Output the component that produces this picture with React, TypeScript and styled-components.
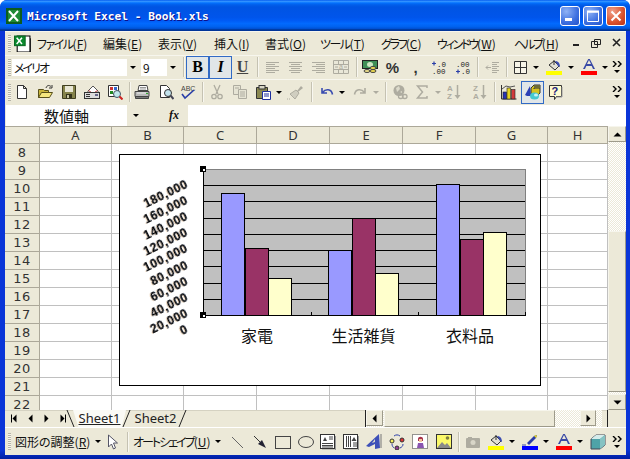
import React from "react";
import styled, { createGlobalStyle } from "styled-components";

const GlobalStyle = createGlobalStyle`
    html, body { margin: 0; padding: 0; background: #fff; }
    #root { width: 630px; height: 459px; overflow: hidden; }
`;

const UI_FONT = `"Noto Sans CJK JP", "Noto Sans", sans-serif`;

const off = "#aeaca0";

const icons: Record<string, React.ReactNode> = {
    excelMenu: (
        <>
            <path d="M3 1h12v15H3z" fill="#fff" stroke="#000" />
            <path d="M16 3v14H5" fill="none" stroke="#000" strokeWidth="1.4" />
            <rect x="0.5" y="1" width="10" height="9" fill="#0b8a2e" stroke="#0a6a22" />
            <path d="M2.5 2.5l5 6M7.5 2.5l-5 6" stroke="#fff" strokeWidth="1.4" />
        </>
    ),
    new: <path d="M3.5 1.5h6l3 3v10h-9zM9.5 1.5v3h3" fill="#fff" stroke="#333" />,
    open: (
        <>
            <path d="M1.5 5.5h5l1 1h4v7h-10z" fill="#c9b53a" stroke="#57501a" />
            <path d="M1.5 13.5l3-5h11l-3 5z" fill="#f5e77e" stroke="#57501a" />
            <path d="M9 4c1-3 3-3 5-1.500M15 1v3h-3" fill="none" stroke="#333" />
        </>
    ),
    save: (
        <>
            <path d="M1.500 1.500h13v13h-13z" fill="#85834a" stroke="#3f3e20" />
            <rect x="4" y="2" width="8" height="6" fill="#e8e7d5" />
            <rect x="5" y="10" width="6" height="4" fill="#33331a" />
            <rect x="6" y="11" width="2" height="3" fill="#c9c8a5" />
        </>
    ),
    mail: (
        <>
            <path d="M4 7l5-5 5 5v2H4z" fill="#fff" stroke="#555" />
            <path d="M4.500 6.500l4.500 3 4.500-3" fill="none" stroke="#b33" />
            <rect x="0.500" y="8.500" width="15" height="6" fill="#dcdcdc" stroke="#333" />
            <path d="M2 10.500h4M2 12.500h4" stroke="#333" />
            <rect x="11" y="10" width="3" height="2" fill="#668" />
        </>
    ),
    perm: (
        <>
            <path d="M1.500 1.500h10v11h-10z" fill="#fff" stroke="#333" />
            <rect x="3" y="3" width="3" height="3" fill="#c33" />
            <rect x="7" y="3" width="3" height="3" fill="#36c" />
            <rect x="3" y="7" width="3" height="3" fill="#282" />
            <circle cx="10" cy="10" r="3.500" fill="#bfe7ea" stroke="#456" />
            <path d="M12.500 12.500l3 3" stroke="#c22" strokeWidth="2" />
        </>
    ),
    print: (
        <>
            <path d="M5 1.500h8l1 5H4z" fill="#fff" stroke="#444" />
            <path d="M6 3.500h6M6 5h6" stroke="#999" />
            <path d="M1 7.500h14v5H1z" fill="#b9b9b9" stroke="#444" />
            <path d="M1.500 12.500h13v2h-13z" fill="#777" stroke="#444" />
            <path d="M3 9h9" stroke="#eee" />
            <rect x="12" y="9" width="2" height="1" fill="#3a3" />
        </>
    ),
    preview: (
        <>
            <path d="M2.500 1.500h6l3 3v9h-9z" fill="#fff" stroke="#333" />
            <circle cx="10" cy="9" r="3.500" fill="#c4e4ee" stroke="#333" />
            <path d="M12.500 11.500l3 3.500" stroke="#445" strokeWidth="2" />
        </>
    ),
    spell: (
        <>
            <text x="1" y="7" fontSize="7" fontFamily="Liberation Sans" fill="#444">ABC</text>
            <path d="M2 10l3 4 9-8" fill="none" stroke="#2b3fa8" strokeWidth="1.600" />
        </>
    ),
    cut: (
        <g fill="none" stroke={off} strokeWidth="1.300">
            <path d="M5 1l4 9M11 1l-4 9" />
            <circle cx="5" cy="12.500" r="2.200" />
            <circle cx="11" cy="12.500" r="2.200" />
        </g>
    ),
    copy: (
        <g fill="#e6e4d4" stroke={off}>
            <path d="M1.500 1.500h7v9h-7z" />
            <path d="M6.500 5.500h8v9h-8z" />
            <path d="M3 4h4M8 8h5M8 10h5M8 12h5" />
        </g>
    ),
    paste: (
        <>
            <path d="M1.500 3.500h11v11h-11z" fill="#8a8850" stroke="#333" />
            <rect x="4" y="1.500" width="6" height="3.500" fill="#d8d6c4" stroke="#333" />
            <path d="M7.500 7.500h8v8h-8z" fill="#fff" stroke="#1d2f9e" />
            <path d="M9 10h5M9 12h5" stroke="#1d2f9e" />
        </>
    ),
    painter: (
        <>
            <path d="M10 7l4-5 2 2-5 4z" fill={off} />
            <path d="M3 10l6-4 3 3-4 6z" fill="#d0cec0" stroke={off} />
            <path d="M0 15h3" stroke={off} strokeDasharray="1 1" />
        </>
    ),
    undo: <path d="M3 4v5h5M3.500 8.500c3-4 9-4 10 2" fill="none" stroke="#3a4cb0" strokeWidth="1.600" />,
    redo: <path d="M13 4v5H8M12.500 8.500c-3-4-9-4-10 2" fill="none" stroke={off} strokeWidth="1.600" />,
    link: (
        <>
            <circle cx="7" cy="6.500" r="5.500" fill={off} />
            <path d="M4 4l3-2 1 3-3 3zM8 8l2-1v2z" fill="#dcdacb" />
            <rect x="6.500" y="10.500" width="4.500" height="4" rx="2" fill="none" stroke={off} strokeWidth="1.300" />
            <rect x="10.500" y="10.500" width="4.500" height="4" rx="2" fill="none" stroke={off} strokeWidth="1.300" />
        </>
    ),
    sigma: <path d="M13 4V2H3.500l5 6-5 6H13v-2" fill="none" stroke={off} strokeWidth="1.500" />,
    az: (
        <>
            <text x="0" y="7" fontSize="8" fontWeight="700" fontFamily="Liberation Sans" fill={off}>A</text>
            <text x="0" y="15" fontSize="8" fontWeight="700" fontFamily="Liberation Sans" fill={off}>Z</text>
            <path d="M10.500 1v11" stroke={off} strokeWidth="1.500" />
            <path d="M7.500 11h6l-3 4z" fill={off} />
        </>
    ),
    za: (
        <>
            <text x="0" y="7" fontSize="8" fontWeight="700" fontFamily="Liberation Sans" fill={off}>Z</text>
            <text x="0" y="15" fontSize="8" fontWeight="700" fontFamily="Liberation Sans" fill={off}>A</text>
            <path d="M10.500 1v11" stroke={off} strokeWidth="1.500" />
            <path d="M7.500 11h6l-3 4z" fill={off} />
        </>
    ),
    chart: (
        <>
            <path d="M0.500 1v14h15" fill="none" stroke="#333" />
            <path d="M1 5l4-3 4 1 5-1" fill="none" stroke="#555" />
            <rect x="2" y="8" width="3.500" height="7" fill="#2733b5" stroke="#222" strokeWidth="0.600" />
            <rect x="6" y="4" width="3.500" height="11" fill="#e6d31f" stroke="#222" strokeWidth="0.600" />
            <rect x="10.500" y="5.500" width="3.500" height="9.500" fill="#d23a3a" stroke="#222" strokeWidth="0.600" />
        </>
    ),
    drawing: (
        <>
            <path d="M6 4l3-3h6v8l-3 3H6z" fill="#d6c21d" stroke="#333" />
            <path d="M9 4h6M9 4v1" stroke="#333" />
            <rect x="9" y="1" width="6" height="3" fill="#6d6a38" />
            <path d="M5 2L0 11l2 1h4z" fill="#2b3fb5" />
            <ellipse cx="9.500" cy="12" rx="4.500" ry="3.500" fill="#46c8d0" />
            <ellipse cx="11" cy="11" rx="2" ry="1.500" fill="#c6f1f3" />
        </>
    ),
    help: (
        <>
            <path d="M1.500 1.500h12v11h-5l-2 3v-3h-5z" fill="#fffbd0" stroke="#333" />
            <path d="M14 3v10H9" fill="none" stroke="#999" />
            <text x="3.600" y="11" fontSize="11" fontWeight="700" fontFamily="Liberation Sans" fill="#20207a">?</text>
        </>
    ),
    alignL: <path d="M2 3.500h13M2 5.500h9M2 7.500h13M2 9.500h9M2 11.500h13M2 13.500h9" stroke={off} />,
    alignC: <path d="M2 3.500h13M4 5.500h9M2 7.500h13M4 9.500h9M2 11.500h13M4 13.500h9" stroke={off} />,
    alignR: <path d="M2 3.500h13M6 5.500h9M2 7.500h13M6 9.500h9M2 11.500h13M6 13.500h9" stroke={off} />,
    merge: (
        <>
            <path d="M0.500 1.500h15v13h-15zM0.500 5.500h15M0.500 10.500h15M5.500 1.500v4M10.500 1.500v4M5.500 10.500v4M10.500 10.500v4" fill="#e9e7d8" stroke={off} />
            <path d="M2 8h3M14 8h-3" stroke={off} />
            <text x="6" y="10" fontSize="7" fontFamily="Liberation Sans" fill={off}>a</text>
        </>
    ),
    currency: (
        <>
            <rect x="0.500" y="1.500" width="15" height="8" fill="#3f8f57" stroke="#222" />
            <ellipse cx="8" cy="5.500" rx="3" ry="2.500" fill="#cfe8c4" />
            <ellipse cx="5" cy="12" rx="3" ry="1.500" fill="#eee08a" stroke="#444" />
            <ellipse cx="11" cy="9" rx="3" ry="1.500" fill="#f0dc50" stroke="#444" />
            <ellipse cx="11" cy="12" rx="3" ry="1.500" fill="#f0dc50" stroke="#444" />
        </>
    ),
    incDec: (
        <>
            <path d="M1 4.500h4M3 2.500v4" stroke="#2b3fa8" strokeWidth="1.200" />
            <text x="6" y="8" fontSize="7.500" fontFamily="Liberation Mono" fill="#222">.0</text>
            <text x="1" y="15" fontSize="7.500" fontFamily="Liberation Mono" fill="#222">.00</text>
        </>
    ),
    decDec: (
        <>
            <text x="1" y="8" fontSize="7.500" fontFamily="Liberation Mono" fill="#222">.00</text>
            <path d="M1 12.500h4M3 10.500v4" stroke="#2b3fa8" strokeWidth="1.200" />
            <text x="6" y="15" fontSize="7.500" fontFamily="Liberation Mono" fill="#222">.0</text>
        </>
    ),
    indent: (
        <>
            <path d="M8 3.500h7M8 5.500h5M8 7.500h7M8 9.500h5M8 11.500h7M8 13.500h5" stroke={off} />
            <path d="M7 8.500H2M4 6.500l-2 2 2 2" fill="none" stroke={off} />
        </>
    ),
    borders: <path d="M2.500 2.500h12v12h-12zM8.500 2.500v12M2.500 8.500h12" fill="#f6f4e8" stroke="#333" />,
    fill: (
        <>
            <path d="M3 6l5-4 5 5-4 4z" fill="#e2e0d4" stroke="#333" />
            <path d="M8 1v5" stroke="#333" />
            <path d="M9 2c3 0 5 2 5 6l-2-1z" fill="#3a4cb0" />
            <rect x="0" y="12" width="16" height="4" fill="#ffff00" />
        </>
    ),
    fontColor: (
        <>
            <path d="M2 10h2l1.300-3h5.400l1.300 3h2L8.800 0H7.200zM6 5l2-4 2 4z" fill="#3a4aa6" fillRule="evenodd" />
            <rect x="0" y="12" width="16" height="4" fill="#ff0000" />
        </>
    ),
    penColor: (
        <>
            <path d="M5 9l7-7 3-1-1 3-7 7z" fill="#2a3ca8" />
            <path d="M12 2l2-1 1 1-1 2z" fill="#e6d31f" />
            <path d="M0 11h4" stroke="#3a4aa6" />
            <rect x="0" y="12" width="16" height="4" fill="#0000ff" />
        </>
    ),
    cursor: <path d="M3.500 1v12l3-3 2 5 2-1-2-5h4z" fill="#fff" stroke="#556" />,
    line: <path d="M3 3l11 11" stroke="#666" />,
    arrow: (
        <>
            <path d="M2 2l7 7" stroke="#333" />
            <path d="M14 14L6 10l4-4z" fill="#223" />
        </>
    ),
    rect: <rect x="0.500" y="2.500" width="15" height="12" fill="none" stroke="#444" />,
    oval: <ellipse cx="8" cy="8" rx="7.500" ry="5.500" fill="none" stroke="#444" />,
    textbox: (
        <>
            <rect x="0.500" y="0.500" width="14" height="14" fill="#fff" stroke="#333" />
            <path d="M15.500 2v14H2" fill="none" stroke="#999" />
            <path d="M2 9.500h11M2 11.500h11M2 13h11M9 3h4M9 5h4" stroke="#444" />
            <path d="M3 7l2-4 2 4z" fill="#444" />
        </>
    ),
    vtext: (
        <>
            <rect x="0.500" y="0.500" width="14" height="14" fill="#fff" stroke="#333" />
            <path d="M15.500 2v14H2" fill="none" stroke="#999" />
            <path d="M3.500 2v11M5.500 2v11M7.500 2v11M11 8v5M13 8v5" stroke="#444" />
            <path d="M8.500 7l2.500-4 2.500 4z" fill="#444" />
        </>
    ),
    wordart: (
        <>
            <path d="M13 0L0 12l3 1 6-3v5l5-1z" fill="#3d50b8" />
            <path d="M9 5v3l-3 1z" fill="#dcdacb" />
            <path d="M15 0v14" stroke="#777" />
        </>
    ),
    diagram: (
        <>
            <circle cx="3" cy="7" r="2" fill="#f5ef5c" stroke="#333" />
            <circle cx="13" cy="6" r="2" fill="#d33" stroke="#333" />
            <circle cx="8" cy="14" r="2" fill="#943b94" stroke="#333" />
            <path d="M5 2c2-1.500 4-1.500 6 0M14 10c0 2-1 3-3 4M5 14c-1-1-2-2-2-4" fill="none" stroke="#2b3fa8" />
        </>
    ),
    clipart: (
        <>
            <rect x="0.500" y="0.500" width="15" height="14" fill="#fff" stroke="#333" strokeDasharray="1 1" />
            <path d="M6 5c0-3 5-3 5 0v2H6z" fill="#a8344a" />
            <rect x="7" y="5" width="3" height="3" fill="#f3c7a0" />
            <path d="M5 14l1-5h5l1 5z" fill="#8a55b0" />
        </>
    ),
    picture: (
        <>
            <rect x="0.500" y="0.500" width="15" height="14" fill="#fbf96a" stroke="#333" />
            <circle cx="11.500" cy="4" r="1.800" fill="#7f7f3f" />
            <path d="M1 14l5-6 3 3 2-2 4 5z" fill="#8a8a8a" />
        </>
    ),
    camera: (
        <>
            <rect x="1" y="4" width="14" height="10" rx="1" fill={off} />
            <rect x="3" y="3" width="4" height="2" fill={off} />
            <circle cx="8" cy="8.500" r="2.500" fill="#d8d6c8" />
        </>
    ),
    cube: (
        <>
            <path d="M1 5l5-4h9v10l-5 4H1z" fill="#4fa3a8" stroke="#445" />
            <path d="M1 5l5-4h9l-5 4z" fill="#d5eceb" />
            <path d="M10 5v10l5-4V1z" fill="#86c3c3" />
        </>
    ),
};

const Window = styled.div`
    width: 630px;
    height: 459px;
    box-sizing: border-box;
    display: flex;
    flex-direction: column;
    border-radius: 7px 7px 0 0;
    background: linear-gradient(180deg, #0a35d8 0, #0a35d8 98%, #001ea0 100%);
    overflow: hidden;
`;

const TitleBar = styled.div`
    flex: 0 0 30px;
    display: flex;
    align-items: center;
    padding: 1px 4px 0 6px;
    background: linear-gradient(180deg, #0058ee 0, #3593ff 4%, #288eff 6%, #127dff 8%, #036ffc 10%, #0262ee 14%, #0057e5 20%, #0054e3 24%, #0055eb 56%, #005bf5 66%, #026afe 76%, #0062ef 86%, #0052d6 92%, #0040ab 94%, #003092 100%);
`;

const TitleText = styled.span`
    margin-left: 5px;
    font: 700 11.2px "DejaVu Sans Mono", monospace;
    color: #fff;
    text-shadow: 1px 1px #0f1089;
    flex: 1;
`;

const CaptionButton = styled.div<{ $close?: boolean }>`
    width: 20px;
    height: 20px;
    margin-left: 3px;
    box-sizing: border-box;
    border: 1px solid #fff;
    border-radius: 3px;
    display: flex;
    align-items: center;
    justify-content: center;
    background: ${p =>
        p.$close
            ? "radial-gradient(circle at 30% 25%, #f0a08a, #d9512c 60%, #b8321a)"
            : "radial-gradient(circle at 30% 25%, #8fb2f5, #3c6fe0 60%, #2453c8)"};
`;

const Client = styled.div`
    flex: 1;
    margin: 0 4px 4px 5px;
    display: flex;
    flex-direction: column;
    background: #ece9d8;
    min-height: 0;
`;

const Bar = styled.div<{ $h: number }>`
    flex: 0 0 ${p => p.$h}px;
    min-height: 0;
    display: flex;
    align-items: center;
    box-shadow: inset 0 1px 0 #f7f6ee;
    font: 12px ${UI_FONT};
    color: #111;
`;

const Gripper = styled.div`
    width: 3px;
    height: 17px;
    margin-left: 3px;
    background: repeating-linear-gradient(180deg, #b5b3a6 0 1px, #f6f5ec 1px 2px);
    flex: none;
`;

const MenuItem = styled.div<{ $w: number }>`
    width: ${p => p.$w}px;
    flex: none;
    font-feature-settings: "palt";
    white-space: nowrap;
    u { text-underline-offset: 1px; }
`;

const Tracked = styled.span<{ $track: number }>`
    letter-spacing: ${p => p.$track}px;
`;

const MenuIcon = styled.div`
    width: 22px;
    flex: none;
    margin-right: 4px;
    display: flex;
    justify-content: center;
`;

const MdiGroup = styled.div`
    margin-left: auto;
    display: flex;
`;

const MdiBtn = styled.div`
    width: 20px;
    display: flex;
    justify-content: center;
`;

const Combo = styled.div<{ $w: number }>`
    width: ${p => p.$w}px;
    height: 17px;
    margin-left: ${p => (p.$w > 100 ? 1 : 2)}px;
    flex: none;
    display: flex;
    background: #fff;
    font: 12px ${UI_FONT};
    line-height: 17px;
    padding-left: 2px;
    box-sizing: border-box;
`;

const ComboText = styled.span`
    flex: 1;
    font-feature-settings: "palt";
`;

const ComboArrow = styled.div`
    width: 12px;
    flex: none;
    background: #ece9d8;
    display: flex;
    align-items: center;
    justify-content: center;
`;

const Slot = styled.div<{ $w: number; $active?: boolean }>`
    width: ${p => p.$w}px;
    height: 23px;
    flex: none;
    box-sizing: border-box;
    display: flex;
    align-items: center;
    justify-content: center;
    border: 1px solid ${p => (p.$active ? "#316ac5" : "transparent")};
    background: ${p => (p.$active ? "#e1e6e8" : "transparent")};
`;

const Separator = styled.div<{ $w: number }>`
    width: ${p => p.$w}px;
    height: 20px;
    flex: none;
    position: relative;
    &::after {
        content: "";
        position: absolute;
        left: 50%;
        top: 0;
        bottom: 0;
        width: 1px;
        background: #c5c2b2;
        box-shadow: 1px 0 0 #f8f7f0;
    }
`;

const Letter = styled.span<{ $italic?: boolean; $under?: boolean }>`
    font: ${p => (p.$italic ? "italic 700 16px" : "700 16px")} "Liberation Serif", serif;
    text-decoration: ${p => (p.$under ? "underline" : "none")};
    color: ${p => (p.$under ? "#444" : "#000")};
`;

const NumberMark = styled.span`
    font: 700 15px/15px "Liberation Sans", sans-serif;
    color: #333;
`;

const Triangle = styled.div<{ $off?: boolean }>`
    width: 0;
    height: 0;
    border-left: 3px solid transparent;
    border-right: 3px solid transparent;
    border-top: 3px solid ${p => (p.$off ? off : "#000")};
`;

const Chevron = styled.div`
    margin-left: auto;
    margin-right: 2px;
    width: 14px;
    display: flex;
    flex-direction: column;
    align-items: center;
    gap: 3px;
    flex: none;
`;

const FormulaBar = styled.div`
    flex: 0 0 21px;
    min-height: 0;
    display: flex;
    align-items: stretch;
`;

const NameBox = styled.div`
    width: 121px;
    margin-left: 1px;
    background: #fff;
    font: 15px/21px ${UI_FONT};
    text-align: center;
    color: #111;
`;

const NameArrow = styled.div`
    width: 18px;
    display: flex;
    align-items: center;
    justify-content: center;
`;

const FxLabel = styled.div`
    width: 43px;
    padding-right: 9px;
    box-sizing: border-box;
    text-align: right;
    font: italic 700 12px/21px "Liberation Serif", serif;
    color: #111;
`;

const FormulaInput = styled.div`
    flex: 1;
    background: #fff;
`;

const SheetRow = styled.div`
    flex: 0 0 284px;
    display: flex;
    min-height: 0;
`;

const Sheet = styled.div`
    width: 603px;
    flex: none;
    display: flex;
    flex-direction: column;
    background: #fff;
`;

const COLS = "35px 72px 72px 73px 73px 73px 73px 72px 60px";

const HeaderRow = styled.div`
    flex: 0 0 18px;
    min-height: 0;
    display: grid;
    grid-template-columns: ${COLS};
    grid-template-rows: 18px;
`;

const ColHead = styled.div`
    background: #ece9d8;
    box-sizing: border-box;
    border-right: 1px solid #aca899;
    border-bottom: 1px solid #aca899;
    border-top: 1px solid #aca899;
    text-align: center;
    font: 13px/16px "Noto Sans", sans-serif;
    color: #333;
`;

const CellArea = styled.div`
    position: relative;
    flex: 1;
    min-height: 0;
    overflow: hidden;
    display: grid;
    grid-template-columns: ${COLS};
    grid-auto-rows: 18px;
`;

const RowHead = styled.div`
    background: #ece9d8;
    box-sizing: border-box;
    border-right: 1px solid #aca899;
    border-bottom: 1px solid #aca899;
    text-align: center;
    font: 13px/18px "DejaVu Sans", sans-serif;
    letter-spacing: 0.4px;
    color: #333;
`;

const Cell = styled.div`
    box-sizing: border-box;
    border-right: 1px solid #c0c0c0;
    border-bottom: 1px solid #c0c0c0;
`;

const ChartFrame = styled.div`
    position: absolute;
    left: 114px;
    top: 10px;
    width: 422px;
    height: 232px;
    box-sizing: border-box;
    background: #fff;
    border: 1px solid #000;
`;

const ChartSvg = styled.svg`
    display: block;
`;

const AxisLabel = styled.text`
    font: 700 12px "Liberation Sans", sans-serif;
    letter-spacing: 0.6px;
    filter: drop-shadow(0.4px 0 0 rgba(40, 110, 220, 0.5)) drop-shadow(-0.4px 0 0 rgba(225, 140, 40, 0.35));
`;

const CategoryLabel = styled.text`
    font: 16px ${UI_FONT};
    fill: #111;
`;

const VScroll = styled.div`
    width: 18px;
    flex: none;
    display: flex;
    flex-direction: column;
    background: repeating-conic-gradient(#ece9d8 0 25%, #fff 0 50%) 0 0 / 2px 2px;
`;

const ScrollBtn = styled.div<{ $w?: number }>`
    flex: none;
    height: 16px;
    width: ${p => (p.$w ? `${p.$w}px` : "auto")};
    box-sizing: border-box;
    background: #ece9d8;
    border: 1px solid;
    border-color: #f6f5ec #9d9a8a #9d9a8a #f6f5ec;
    display: flex;
    align-items: center;
    justify-content: center;
`;

const VTrack = styled.div<{ $h: number }>`
    flex: 0 0 ${p => p.$h}px;
`;

const VThumb = styled(ScrollBtn)`
    height: 161px;
`;

const TabRow = styled.div`
    flex: 0 0 17px;
    min-height: 0;
    display: flex;
    align-items: stretch;
    box-shadow: inset 0 1px 0 #d5d2c2;
`;

const TabNav = styled.div`
    width: 63px;
    margin-left: 2px;
    flex: none;
    display: flex;
    align-items: center;
    justify-content: space-around;
`;

const Tab = styled.div<{ $active?: boolean }>`
    flex: none;
    width: 53px;
    margin-left: 2px;
    text-align: center;
    font: 13px/16px "Noto Sans", sans-serif;
    color: #222;
    text-decoration: ${p => (p.$active ? "underline" : "none")};
    background: ${p => (p.$active ? "#fafaf5" : "transparent")};
    clip-path: ${p => (p.$active ? "polygon(0 0, 100% 0, 92% 100%, 10% 100%)" : "none")};
`;

const TabEdge = styled.svg`
    flex: none;
    margin: 0 -4px;
    position: relative;
`;

const HScrollGroup = styled.div`
    margin-left: auto;
    width: 236px;
    display: flex;
    align-items: stretch;
    box-shadow: -1px 0 0 #222;
    background: repeating-conic-gradient(#ece9d8 0 25%, #fff 0 50%) 0 0 / 2px 2px;
`;

const HThumb = styled(ScrollBtn)`
    height: auto;
    width: 171px;
    margin-left: 1px;
`;

const HEnd = styled.div`
    width: 18px;
    flex: none;
    margin-left: 6px;
    box-shadow: -1px 0 0 #222;
    background: #ece9d8;
`;

const DrawBar = styled(Bar)`
    box-shadow: inset 0 1px 0 #fff;
`;

const DrawMenu = styled.div<{ $w: number }>`
    width: ${p => p.$w}px;
    margin-left: 4px;
    flex: none;
    display: flex;
    align-items: center;
    gap: 5px;
    font-feature-settings: "palt";
    white-space: nowrap;
`;

type ToolProps = { name: string; w?: number; size?: number; active?: boolean };

const Glyph: React.FC<{ name: string; size?: number }> = ({ name, size = 16 }) => (
    <svg width={size} height={size} viewBox="0 0 16 16">
        {icons[name]}
    </svg>
);

const Tool: React.FC<ToolProps> = ({ name, w = 23, size, active }) => (
    <Slot $w={w} $active={active}>
        <Glyph name={name} size={size} />
    </Slot>
);

const Caret: React.FC<{ w?: number; off?: boolean }> = ({ w = 8, off: disabled }) => (
    <Slot $w={w}>
        <Triangle $off={disabled} />
    </Slot>
);

const More = () => (
    <Chevron>
        <svg width="11" height="6" viewBox="0 0 11 6">
            <path d="M1 0l3 3-3 3M6 0l3 3-3 3" fill="none" stroke="#000" strokeWidth="1.400" />
        </svg>
        <Triangle />
    </Chevron>
);

const MENUS = [
    { label: "ファイル", key: "F", w: 66, track: -1.5 },
    { label: "編集", key: "E", w: 55, track: 0 },
    { label: "表示", key: "V", w: 56, track: 0 },
    { label: "挿入", key: "I", w: 51, track: 0 },
    { label: "書式", key: "O", w: 55, track: 0 },
    { label: "ツール", key: "T", w: 61, track: -1.5 },
    { label: "グラフ", key: "C", w: 56, track: -2.2 },
    { label: "ウィンドウ", key: "W", w: 77, track: -2.2 },
    { label: "ヘルプ", key: "H", w: 50, track: -2.2 },
];

const COL_NAMES = ["", "A", "B", "C", "D", "E", "F", "G", "H"];
const ROWS = [8, 9, 10, 11, 12, 13, 14, 15, 16, 17, 18, 19, 20, 21, 22];

const GRID_Y = [184.5, 200.5, 217.5, 233.5, 249.5, 265.5, 282.5, 298.5];
const AXIS = ["180,000", "160,000", "140,000", "120,000", "100,000", "80,000", "60,000", "40,000", "20,000", "0"];
const SERIES = ["#9999ff", "#993366", "#ffffcc"];
const BARS = [
    { x: 221.5, tops: [192.5, 247.5, 277.5] },
    { x: 328.5, tops: [249.5, 217.5, 272.5] },
    { x: 436.5, tops: [183.5, 238.5, 231.5] },
];

const Handle: React.FC<{ x: number; y: number }> = ({ x, y }) => (
    <>
        <rect x={x - 3} y={y - 3} width="6" height="6" fill="#000" />
        <rect x={x} y={y} width="2" height="2" fill="#fff" />
    </>
);

const Chart = () => (
    <ChartFrame>
        <ChartSvg width="420" height="230" viewBox="120 154 420 230">
            <rect x="203.5" y="168.500" width="322" height="146" fill="#c0c0c0" stroke="#808080" />
            {GRID_Y.map(y => (
                <path key={y} d={`M204 ${y}H525`} stroke="#000" shapeRendering="crispEdges" />
            ))}
            {BARS.map(group =>
                group.tops.map((top, i) => (
                    <rect
                        key={`${group.x}-${i}`}
                        x={group.x + i * 23.500}
                        y={top}
                        width="23"
                        height={314.500 - top}
                        fill={SERIES[i]}
                        stroke="#000"
                        shapeRendering="crispEdges"
                    />
                ))
            )}
            <path d="M203.500 168v147M203 314.500h323M311.500 311v4M418.500 311v4M525.500 311v4" stroke="#000" fill="none" shapeRendering="crispEdges" />
            <Handle x={203} y={168} />
            <Handle x={203} y={314} />
            {AXIS.map((label, i) => {
                const y = 186 + i * 16.100;
                return (
                    <AxisLabel key={label} x={189} y={y} textAnchor="end" transform={`rotate(-26 189 ${y})`}>
                        {label}
                    </AxisLabel>
                );
            })}
            <CategoryLabel x={257} y={341} textAnchor="middle">家電</CategoryLabel>
            <CategoryLabel x={363.500} y={341} textAnchor="middle">生活雑貨</CategoryLabel>
            <CategoryLabel x={470} y={341} textAnchor="middle">衣料品</CategoryLabel>
        </ChartSvg>
    </ChartFrame>
);

const ArrowGlyph: React.FC<{ dir: "left" | "right" | "up" | "down"; bar?: boolean }> = ({ dir, bar }) => {
    const rot = { right: 0, down: 90, left: 180, up: 270 }[dir];
    return (
        <svg width="9" height="9" viewBox="0 0 9 9">
            <g transform={`rotate(${rot} 4.500 4.500)`}>
                <path d="M2.500 0.500l4 4-4 4z" fill="#000" />
                {bar && <path d="M7.500 0.500v8" stroke="#000" />}
            </g>
        </svg>
    );
};

export default function App() {
    return (
        <>
            <GlobalStyle />
            <Window>
                <TitleBar>
                    <svg width="16" height="16" viewBox="0 0 16 16">
                        <rect width="16" height="16" fill="#0d5c1c" />
                        <rect x="2" y="2" width="12" height="12" fill="#1f8a35" />
                        <path d="M3 3l9 10M12 3l-9 10" stroke="#fff" strokeWidth="2" />
                    </svg>
                    <TitleText>Microsoft Excel - Book1.xls</TitleText>
                    <CaptionButton>
                        <svg width="12" height="12" viewBox="0 0 12 12">
                            <rect x="1" y="8" width="7" height="3" fill="#fff" />
                        </svg>
                    </CaptionButton>
                    <CaptionButton>
                        <svg width="14" height="14" viewBox="0 0 14 14">
                            <path d="M1.500 3h11v9.500h-11z" fill="none" stroke="#fff" />
                            <path d="M1 2.500h12" stroke="#fff" strokeWidth="2" />
                        </svg>
                    </CaptionButton>
                    <CaptionButton $close>
                        <svg width="12" height="12" viewBox="0 0 12 12">
                            <path d="M1.500 1.500l9 9M10.500 1.500l-9 9" stroke="#fff" strokeWidth="2" />
                        </svg>
                    </CaptionButton>
                </TitleBar>
                <Client>
                    <Bar $h={24}>
                        <Gripper />
                        <MenuIcon>
                            <Glyph name="excelMenu" size={17} />
                        </MenuIcon>
                        {MENUS.map(m => (
                            <MenuItem key={m.key} $w={m.w}>
                                <Tracked $track={m.track}>{m.label}</Tracked>(<u>{m.key}</u>)
                            </MenuItem>
                        ))}
                        <MdiGroup>
                            <MdiBtn>
                                <svg width="9" height="9" viewBox="0 0 9 9">
                                    <rect x="1" y="6" width="6" height="2" fill="#222" />
                                </svg>
                            </MdiBtn>
                            <MdiBtn>
                                <svg width="10" height="10" viewBox="0 0 10 10">
                                    <path d="M3.500 1.500h6v5h-6zM0.500 3.500h6v6h-6z" fill="#ece9d8" stroke="#222" />
                                </svg>
                            </MdiBtn>
                            <MdiBtn>
                                <svg width="9" height="9" viewBox="0 0 9 9">
                                    <path d="M1 1l7 7M8 1l-7 7" stroke="#222" strokeWidth="1.600" />
                                </svg>
                            </MdiBtn>
                        </MdiGroup>
                    </Bar>
                    <Bar $h={24}>
                        <Gripper />
                        <Combo $w={127}>
                            <ComboText>
                                <Tracked $track={-2}>メイリオ</Tracked>
                            </ComboText>
                            <ComboArrow>
                                <Triangle />
                            </ComboArrow>
                        </Combo>
                        <Combo $w={38}>
                            <ComboText>9</ComboText>
                            <ComboArrow>
                                <Triangle />
                            </ComboArrow>
                        </Combo>
                        <Separator $w={7} />
                        <Slot $w={23} $active>
                            <Letter>B</Letter>
                        </Slot>
                        <Slot $w={23} $active>
                            <Letter $italic>I</Letter>
                        </Slot>
                        <Slot $w={21}>
                            <Letter $under>U</Letter>
                        </Slot>
                        <Separator $w={8} />
                        <Tool name="alignL" w={22} />
                        <Tool name="alignC" />
                        <Tool name="alignR" />
                        <Tool name="merge" w={24} />
                        <Separator $w={5} />
                        <Tool name="currency" />
                        <Slot $w={23}>
                            <NumberMark>%</NumberMark>
                        </Slot>
                        <Slot $w={23}>
                            <NumberMark>,</NumberMark>
                        </Slot>
                        <Tool name="incDec" w={24} />
                        <Tool name="decDec" />
                        <Separator $w={6} />
                        <Tool name="indent" />
                        <Separator $w={5} />
                        <Tool name="borders" w={24} />
                        <Caret />
                        <Slot $w={2} />
                        <Tool name="fill" w={24} />
                        <Caret w={9} />
                        <Slot $w={1} />
                        <Tool name="fontColor" w={24} />
                        <Caret />
                        <More />
                    </Bar>
                    <Bar $h={26}>
                        <Gripper />
                        <Tool name="new" w={22} />
                        <Tool name="open" w={24} />
                        <Tool name="save" />
                        <Tool name="mail" />
                        <Tool name="perm" w={24} />
                        <Separator $w={3} />
                        <Tool name="print" w={24} />
                        <Tool name="preview" />
                        <Tool name="spell" w={21} />
                        <Separator $w={8} />
                        <Tool name="cut" w={22} />
                        <Tool name="copy" />
                        <Tool name="paste" w={24} />
                        <Caret />
                        <Tool name="painter" w={24} />
                        <Separator $w={8} />
                        <Tool name="undo" />
                        <Caret />
                        <Slot $w={2} />
                        <Tool name="redo" w={24} />
                        <Caret off />
                        <Separator $w={10} />
                        <Tool name="link" w={20} />
                        <Slot $w={2} />
                        <Tool name="sigma" w={20} />
                        <Caret w={12} off />
                        <Tool name="az" w={21} />
                        <Slot $w={5} />
                        <Tool name="za" w={21} />
                        <Separator $w={6} />
                        <Tool name="chart" w={24} />
                        <Tool name="drawing" active />
                        <Tool name="help" w={24} />
                        <More />
                    </Bar>
                    <FormulaBar>
                        <NameBox>数値軸</NameBox>
                        <NameArrow>
                            <Triangle />
                        </NameArrow>
                        <FxLabel>fx</FxLabel>
                        <FormulaInput />
                    </FormulaBar>
                    <SheetRow>
                        <Sheet>
                            <HeaderRow>
                                {COL_NAMES.map(c => (
                                    <ColHead key={c || "corner"}>{c}</ColHead>
                                ))}
                            </HeaderRow>
                            <CellArea>
                                {ROWS.map(r => (
                                    <React.Fragment key={r}>
                                        <RowHead>{r}</RowHead>
                                        {COL_NAMES.slice(1).map(c => (
                                            <Cell key={c} />
                                        ))}
                                    </React.Fragment>
                                ))}
                                <Chart />
                            </CellArea>
                        </Sheet>
                        <VScroll>
                            <ScrollBtn>
                                <ArrowGlyph dir="up" />
                            </ScrollBtn>
                            <VTrack $h={89} />
                            <VThumb />
                            <VTrack $h={2} />
                            <ScrollBtn>
                                <ArrowGlyph dir="down" />
                            </ScrollBtn>
                        </VScroll>
                    </SheetRow>
                    <TabRow>
                        <TabNav>
                            <ArrowGlyph dir="left" bar />
                            <ArrowGlyph dir="left" />
                            <ArrowGlyph dir="right" />
                            <ArrowGlyph dir="right" bar />
                        </TabNav>
                        <TabEdge width="9" height="17" viewBox="0 0 9 17">
                            <path d="M1 0l7 17" stroke="#222" fill="none" />
                        </TabEdge>
                        <Tab $active>Sheet1</Tab>
                        <TabEdge width="9" height="17" viewBox="0 0 9 17">
                            <path d="M8 0L1 17" stroke="#222" fill="none" />
                        </TabEdge>
                        <Tab>Sheet2</Tab>
                        <TabEdge width="9" height="17" viewBox="0 0 9 17">
                            <path d="M8 0L1 17" stroke="#222" fill="none" />
                        </TabEdge>
                        <HScrollGroup>
                            <ScrollBtn $w={17}>
                                <ArrowGlyph dir="left" />
                            </ScrollBtn>
                            <HThumb />
                            <VTrack $h={25} />
                            <ScrollBtn $w={16}>
                                <ArrowGlyph dir="right" />
                            </ScrollBtn>
                        </HScrollGroup>
                        <HEnd />
                    </TabRow>
                    <DrawBar $h={29}>
                        <Gripper />
                        <DrawMenu $w={86}>
                            <span>図形の調整(<u>R</u>)</span>
                            <Triangle />
                        </DrawMenu>
                        <Tool name="cursor" w={24} />
                        <Separator $w={4} />
                        <DrawMenu $w={92}>
                            <span>
                                <Tracked $track={-2}>オートシェイプ</Tracked>(<u>U</u>)
                            </span>
                            <Triangle />
                        </DrawMenu>
                        <Tool name="line" />
                        <Tool name="arrow" w={24} />
                        <Tool name="rect" w={22} />
                        <Tool name="oval" />
                        <Tool name="textbox" w={22} />
                        <Tool name="vtext" />
                        <Tool name="wordart" w={24} />
                        <Tool name="diagram" w={22} />
                        <Tool name="clipart" w={24} />
                        <Tool name="picture" />
                        <Separator $w={6} />
                        <Tool name="camera" />
                        <Tool name="fill" />
                        <Caret w={9} />
                        <Slot $w={1} />
                        <Tool name="penColor" w={24} />
                        <Caret />
                        <Slot $w={2} />
                        <Tool name="fontColor" w={24} />
                        <Caret />
                        <Slot $w={2} />
                        <Tool name="cube" w={24} />
                        <More />
                    </DrawBar>
                </Client>
            </Window>
        </>
    );
}
